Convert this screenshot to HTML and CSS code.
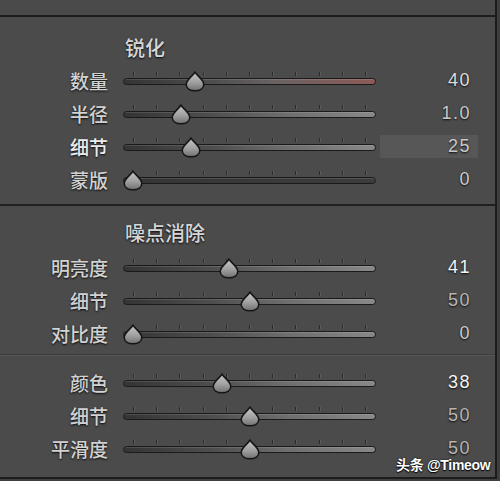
FILE: index.html
```html
<!DOCTYPE html>
<html lang="zh">
<head>
<meta charset="utf-8">
<link rel="stylesheet" href="styles.css">
</head>
<body>
<svg class="defs" width="0" height="0">
  <defs>
    <linearGradient id="tg" x1="0" y1="0" x2="0" y2="1">
      <stop offset="0" stop-color="#c8c8c8"/>
      <stop offset="0.55" stop-color="#a0a0a0"/>
      <stop offset="1" stop-color="#707070"/>
    </linearGradient>
  </defs>
</svg>
<div class="panel">
  <div class="topbar"></div>

  <section class="sec sec1">
    <div class="title">锐化</div>
    <div class="row">
      <div class="label">数量</div>
      <div class="slider"><div class="ticks"><i></i><i></i><i></i><i></i><i></i><i></i><i></i><i></i><i></i><i></i><i></i></div><div class="track red"></div><svg class="thumb" style="left:62px" viewBox="0 0 20 21"><path d="M10 1.2 C11.8 4.4 18.8 8.8 18.8 13.2 C18.8 17.4 15 19.8 10 19.8 C5 19.8 1.2 17.4 1.2 13.2 C1.2 8.8 8.2 4.4 10 1.2 Z"/></svg></div>
      <div class="value v-bright">40</div>
    </div>
    <div class="row">
      <div class="label">半径</div>
      <div class="slider"><div class="ticks"><i></i><i></i><i></i><i></i><i></i><i></i><i></i><i></i><i></i><i></i><i></i></div><div class="track"></div><svg class="thumb" style="left:48px" viewBox="0 0 20 21"><path d="M10 1.2 C11.8 4.4 18.8 8.8 18.8 13.2 C18.8 17.4 15 19.8 10 19.8 C5 19.8 1.2 17.4 1.2 13.2 C1.2 8.8 8.2 4.4 10 1.2 Z"/></svg></div>
      <div class="value">1.0</div>
    </div>
    <div class="row">
      <div class="label label-hi">细节</div>
      <div class="slider"><div class="ticks"><i></i><i></i><i></i><i></i><i></i><i></i><i></i><i></i><i></i><i></i><i></i></div><div class="track"></div><svg class="thumb" style="left:58px" viewBox="0 0 20 21"><path d="M10 1.2 C11.8 4.4 18.8 8.8 18.8 13.2 C18.8 17.4 15 19.8 10 19.8 C5 19.8 1.2 17.4 1.2 13.2 C1.2 8.8 8.2 4.4 10 1.2 Z"/></svg></div>
      <div class="value active">25</div>
    </div>
    <div class="row">
      <div class="label">蒙版</div>
      <div class="slider"><div class="ticks"><i></i><i></i><i></i><i></i><i></i><i></i><i></i><i></i><i></i><i></i><i></i></div><div class="track dark"></div><svg class="thumb" style="left:0px" viewBox="0 0 20 21"><path d="M10 1.2 C11.8 4.4 18.8 8.8 18.8 13.2 C18.8 17.4 15 19.8 10 19.8 C5 19.8 1.2 17.4 1.2 13.2 C1.2 8.8 8.2 4.4 10 1.2 Z"/></svg></div>
      <div class="value">0</div>
    </div>
  </section>

  <section class="sec sec2">
    <div class="title">噪点消除</div>
    <div class="row">
      <div class="label">明亮度</div>
      <div class="slider"><div class="ticks"><i></i><i></i><i></i><i></i><i></i><i></i><i></i><i></i><i></i><i></i><i></i></div><div class="track"></div><svg class="thumb" style="left:96px" viewBox="0 0 20 21"><path d="M10 1.2 C11.8 4.4 18.8 8.8 18.8 13.2 C18.8 17.4 15 19.8 10 19.8 C5 19.8 1.2 17.4 1.2 13.2 C1.2 8.8 8.2 4.4 10 1.2 Z"/></svg></div>
      <div class="value v-white">41</div>
    </div>
    <div class="row">
      <div class="label">细节</div>
      <div class="slider"><div class="ticks"><i></i><i></i><i></i><i></i><i></i><i></i><i></i><i></i><i></i><i></i><i></i></div><div class="track"></div><svg class="thumb" style="left:117px" viewBox="0 0 20 21"><path d="M10 1.2 C11.8 4.4 18.8 8.8 18.8 13.2 C18.8 17.4 15 19.8 10 19.8 C5 19.8 1.2 17.4 1.2 13.2 C1.2 8.8 8.2 4.4 10 1.2 Z"/></svg></div>
      <div class="value v-dim">50</div>
    </div>
    <div class="row">
      <div class="label">对比度</div>
      <div class="slider"><div class="ticks"><i></i><i></i><i></i><i></i><i></i><i></i><i></i><i></i><i></i><i></i><i></i></div><div class="track"></div><svg class="thumb" style="left:0px" viewBox="0 0 20 21"><path d="M10 1.2 C11.8 4.4 18.8 8.8 18.8 13.2 C18.8 17.4 15 19.8 10 19.8 C5 19.8 1.2 17.4 1.2 13.2 C1.2 8.8 8.2 4.4 10 1.2 Z"/></svg></div>
      <div class="value">0</div>
    </div>
  </section>

  <section class="sec sec3">
    <div class="row">
      <div class="label">颜色</div>
      <div class="slider"><div class="ticks"><i></i><i></i><i></i><i></i><i></i><i></i><i></i><i></i><i></i><i></i><i></i></div><div class="track"></div><svg class="thumb" style="left:89px" viewBox="0 0 20 21"><path d="M10 1.2 C11.8 4.4 18.8 8.8 18.8 13.2 C18.8 17.4 15 19.8 10 19.8 C5 19.8 1.2 17.4 1.2 13.2 C1.2 8.8 8.2 4.4 10 1.2 Z"/></svg></div>
      <div class="value v-white">38</div>
    </div>
    <div class="row">
      <div class="label">细节</div>
      <div class="slider"><div class="ticks"><i></i><i></i><i></i><i></i><i></i><i></i><i></i><i></i><i></i><i></i><i></i></div><div class="track"></div><svg class="thumb" style="left:117px" viewBox="0 0 20 21"><path d="M10 1.2 C11.8 4.4 18.8 8.8 18.8 13.2 C18.8 17.4 15 19.8 10 19.8 C5 19.8 1.2 17.4 1.2 13.2 C1.2 8.8 8.2 4.4 10 1.2 Z"/></svg></div>
      <div class="value v-dim">50</div>
    </div>
    <div class="row">
      <div class="label">平滑度</div>
      <div class="slider"><div class="ticks"><i></i><i></i><i></i><i></i><i></i><i></i><i></i><i></i><i></i><i></i><i></i></div><div class="track"></div><svg class="thumb" style="left:117px" viewBox="0 0 20 21"><path d="M10 1.2 C11.8 4.4 18.8 8.8 18.8 13.2 C18.8 17.4 15 19.8 10 19.8 C5 19.8 1.2 17.4 1.2 13.2 C1.2 8.8 8.2 4.4 10 1.2 Z"/></svg></div>
      <div class="value v-dim">50</div>
    </div>
  </section>
</div>

<div class="watermark">头条 @Timeow</div>
</body>
</html>
```

FILE: styles.css
```css
html, body {
  margin: 0;
  padding: 0;
}
body {
  background: #3e3e3e;
  width: 500px;
  height: 481px;
  overflow: hidden;
  position: relative;
  font-family: "Liberation Sans", "Noto Sans CJK SC", sans-serif;
}
.defs {
  position: absolute;
  width: 0;
  height: 0;
}
.panel {
  width: 495px;
  background: #4b4b4b;
  border-right: 2px solid #1c1c1c;
  border-bottom: 2px solid #1c1c1c;
}
.topbar {
  height: 15px;
  background: #4a4a4a;
  border-bottom: 2px solid #1d1d1d;
}
.sec1 {
  padding: 19px 0 8px;
  border-bottom: 2px solid #202020;
}
.sec2 {
  padding: 15px 0 4px;
  border-bottom: 1px solid #3d3d3d;
  box-shadow: 0 1px 0 #555555;
}
.sec3 {
  padding: 11px 0 12px;
}
.title {
  height: 24px;
  line-height: 24px;
  padding-left: 125px;
  font-family: "Noto Sans CJK SC", sans-serif;
  font-size: 20px;
  font-weight: 500;
  color: #d6d6d6;
  text-shadow: 0 1px 2px rgba(0,0,0,0.9);
  margin-bottom: 4px;
}
.sec2 .title {
  margin-bottom: 6px;
}
.row {
  display: flex;
  align-items: center;
  height: 33px;
}
.label {
  width: 108px;
  margin-right: 15px;
  text-align: right;
  font-family: "Noto Sans CJK SC", sans-serif;
  font-size: 19px;
  font-weight: 500;
  color: #d2d2d2;
  text-shadow: 0 1px 2px rgba(0,0,0,0.9);
  line-height: 33px;
}
.label-hi {
  color: #ececec;
}
.slider {
  position: relative;
  width: 253px;
  height: 33px;
  flex: none;
}
.ticks {
  position: absolute;
  left: 0;
  right: 0;
  top: 8px;
  height: 4px;
  padding: 0 10px;
  display: flex;
  justify-content: space-between;
}
.ticks i {
  display: block;
  width: 1px;
  height: 4px;
  background: #2a2a2a;
  box-shadow: 1px 0 0 rgba(110,110,110,0.5);
}
.track {
  position: absolute;
  left: 0;
  right: 0;
  top: 14px;
  height: 5px;
  border: 1px solid #1a1a1a;
  border-radius: 4px;
  background: linear-gradient(to right, #343434 0%, #4e4e4e 35%, #6e6e6e 65%, #888888 100%);
  box-shadow: inset 0 1px 0 rgba(255,255,255,0.12);
}
.track.red {
  background: linear-gradient(to right, #343434 0%, #4e4e4e 35%, #6a6262 60%, #8c5a56 100%);
}
.track.dark {
  background: linear-gradient(to right, #353535, #3c3c3c);
}
.thumb {
  position: absolute;
  top: 7px;
  width: 20px;
  height: 21px;
}
.thumb path {
  fill: url(#tg);
  stroke: #161616;
  stroke-width: 1.6;
}
.value {
  margin-left: 4px;
  width: 98px;
  height: 23px;
  line-height: 23px;
  padding-right: 7px;
  box-sizing: border-box;
  text-align: right;
  font-size: 18px;
  letter-spacing: 1.5px;
  color: #cacaca;
  text-shadow: 0 1px 2px rgba(0,0,0,0.9);
}
.value.active {
  background: #575757;
}
.v-bright {
  color: #dedede;
}
.v-white {
  color: #f4f4f4;
}
.v-dim {
  color: #b6b6b6;
}
.watermark {
  position: absolute;
  left: 396px;
  top: 454px;
  font-size: 14px;
  font-weight: bold;
  letter-spacing: -0.3px;
  color: #ffffff;
  text-shadow: 0 0 2px rgba(0,0,0,0.9), 0 1px 1px #000;
  white-space: nowrap;
}
```
